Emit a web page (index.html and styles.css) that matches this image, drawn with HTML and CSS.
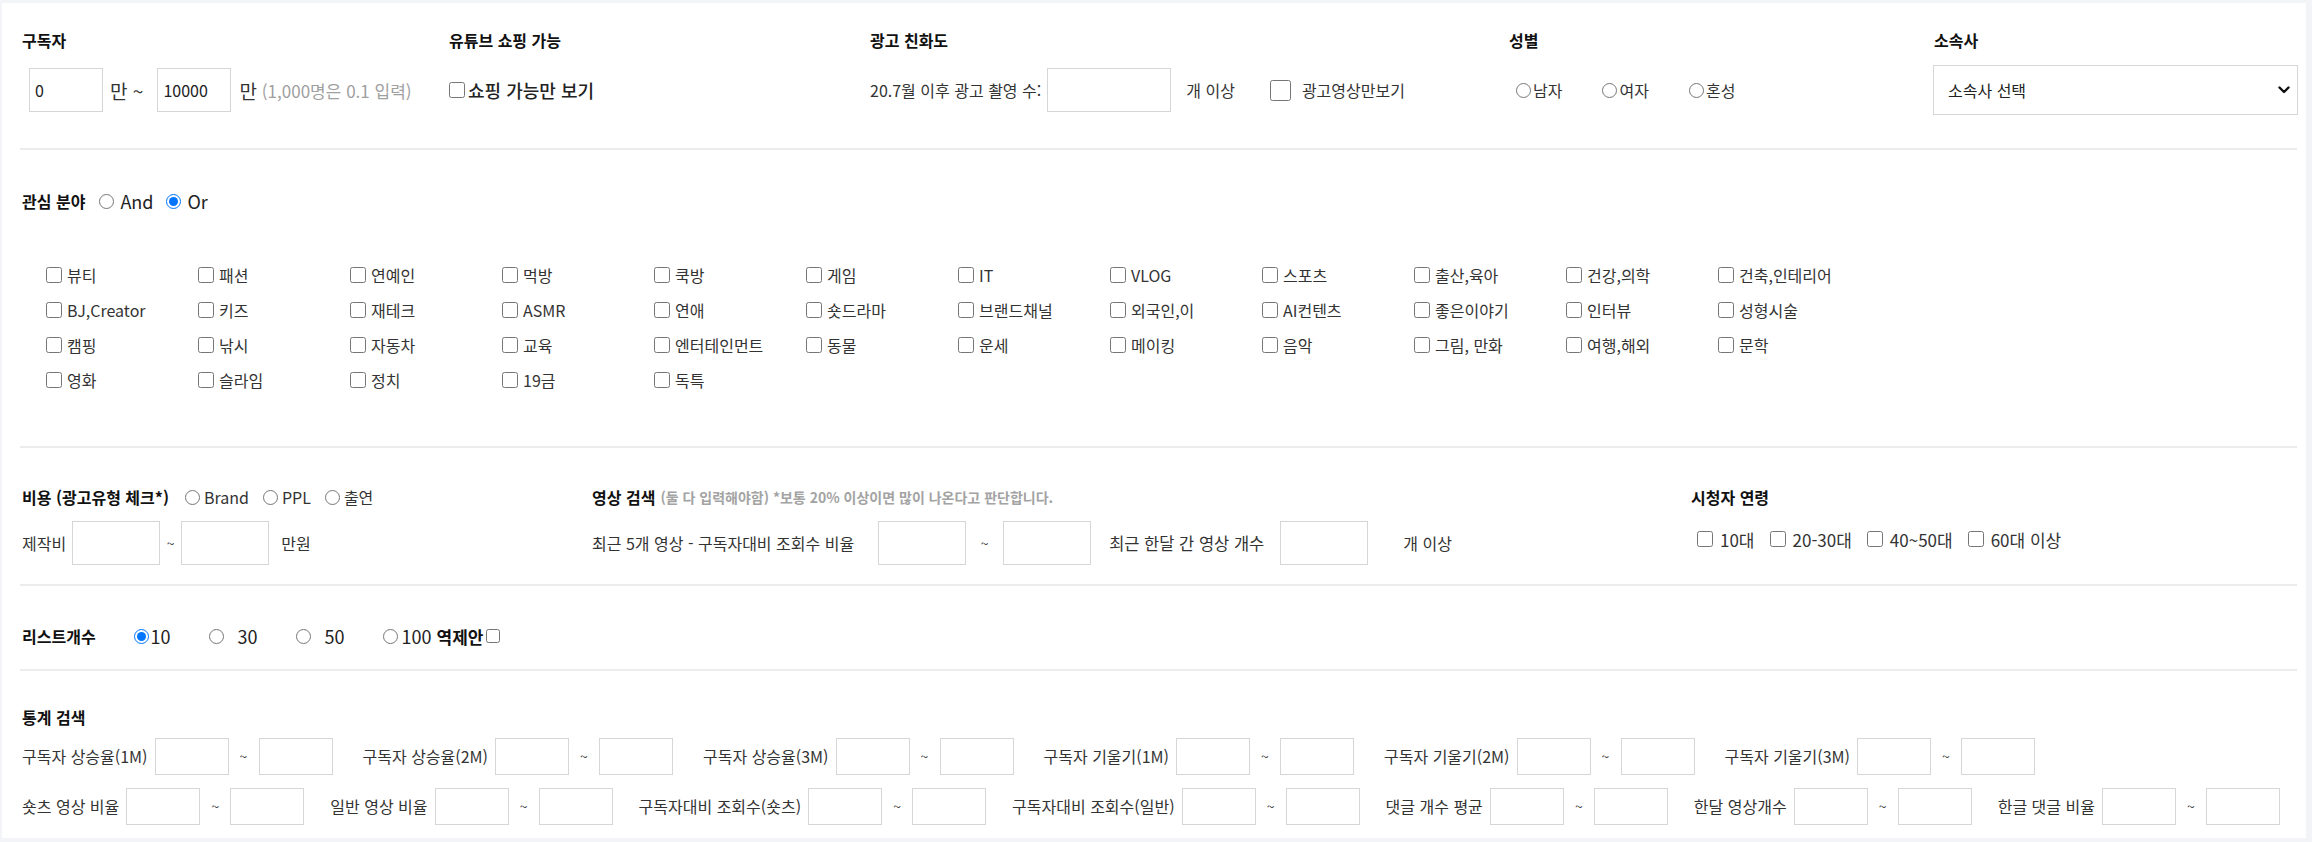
FILE: index.html
```html
<!DOCTYPE html>
<html lang="ko">
<head>
  <meta charset="UTF-8" />
  <title>채널 검색 필터</title>
  <link rel="stylesheet" href="styles.css">
</head>
<body>

<div class="panel">

  <div class="sec top">
    <div class="col c1">
      <div class="ttl">구독자</div>
      <div class="ctl">
        <input type="text" class="box sub-in first" value="0" />
        <span class="unit">만 ~</span>
        <input type="text" class="box sub-in" value="10000" />
        <span class="unit unit-end">만</span>
        <span class="hint">(1,000명은 0.1 입력)</span>
      </div>
    </div>
    <div class="col c2">
      <div class="ttl">유튜브 쇼핑 가능</div>
      <div class="ctl">
        <label class="shop"><input type="checkbox" />쇼핑 가능만 보기</label>
      </div>
    </div>
    <div class="col c3">
      <div class="ttl">광고 친화도</div>
      <div class="ctl">
        <span>20.7월 이후 광고 촬영 수:</span>
        <input type="text" class="box ad-in" />
        <span class="ad-unit">개 이상</span>
        <label class="ad-only"><input type="checkbox" />광고영상만보기</label>
      </div>
    </div>
    <div class="col c4">
      <div class="ttl">성별</div>
      <div class="ctl gender">
        <label><input type="radio" name="gender" />남자</label>
        <label><input type="radio" name="gender" />여자</label>
        <label><input type="radio" name="gender" />혼성</label>
      </div>
    </div>
    <div class="col c5">
      <div class="ttl">소속사</div>
      <div class="ctl">
        <div class="select-wrap">
          <select class="agency">
            <option>소속사 선택</option>
          </select>
          <svg class="chev" width="12" height="8" viewBox="0 0 12 8"><path d="M1.5 1.5 L6 6 L10.5 1.5" fill="none" stroke="#111" stroke-width="2.4" stroke-linecap="round" stroke-linejoin="round"/></svg>
        </div>
      </div>
    </div>
  </div>

  <hr class="line" />

  <div class="sec interest">
    <div class="ttl-row">
      <span class="ttl">관심 분야</span>
      <label class="op"><input type="radio" name="op" />And</label>
      <label class="op"><input type="radio" name="op" checked />Or</label>
    </div>
    <div class="cat-grid">
      <label class="chk"><input type="checkbox" />뷰티</label>
      <label class="chk"><input type="checkbox" />패션</label>
      <label class="chk"><input type="checkbox" />연예인</label>
      <label class="chk"><input type="checkbox" />먹방</label>
      <label class="chk"><input type="checkbox" />쿡방</label>
      <label class="chk"><input type="checkbox" />게임</label>
      <label class="chk"><input type="checkbox" />IT</label>
      <label class="chk"><input type="checkbox" />VLOG</label>
      <label class="chk"><input type="checkbox" />스포츠</label>
      <label class="chk"><input type="checkbox" />출산,육아</label>
      <label class="chk"><input type="checkbox" />건강,의학</label>
      <label class="chk"><input type="checkbox" />건축,인테리어</label>

      <label class="chk"><input type="checkbox" />BJ,Creator</label>
      <label class="chk"><input type="checkbox" />키즈</label>
      <label class="chk"><input type="checkbox" />재테크</label>
      <label class="chk"><input type="checkbox" />ASMR</label>
      <label class="chk"><input type="checkbox" />연애</label>
      <label class="chk"><input type="checkbox" />숏드라마</label>
      <label class="chk"><input type="checkbox" />브랜드채널</label>
      <label class="chk"><input type="checkbox" />외국인,이</label>
      <label class="chk"><input type="checkbox" />AI컨텐츠</label>
      <label class="chk"><input type="checkbox" />좋은이야기</label>
      <label class="chk"><input type="checkbox" />인터뷰</label>
      <label class="chk"><input type="checkbox" />성형시술</label>

      <label class="chk"><input type="checkbox" />캠핑</label>
      <label class="chk"><input type="checkbox" />낚시</label>
      <label class="chk"><input type="checkbox" />자동차</label>
      <label class="chk"><input type="checkbox" />교육</label>
      <label class="chk"><input type="checkbox" />엔터테인먼트</label>
      <label class="chk"><input type="checkbox" />동물</label>
      <label class="chk"><input type="checkbox" />운세</label>
      <label class="chk"><input type="checkbox" />메이킹</label>
      <label class="chk"><input type="checkbox" />음악</label>
      <label class="chk"><input type="checkbox" />그림, 만화</label>
      <label class="chk"><input type="checkbox" />여행,해외</label>
      <label class="chk"><input type="checkbox" />문학</label>

      <label class="chk"><input type="checkbox" />영화</label>
      <label class="chk"><input type="checkbox" />슬라임</label>
      <label class="chk"><input type="checkbox" />정치</label>
      <label class="chk"><input type="checkbox" />19금</label>
      <label class="chk"><input type="checkbox" />독특</label>
    </div>
  </div>

  <hr class="line" />

  <div class="sec cost">
    <div class="grp g1">
      <div class="ttl-row">
        <span class="ttl">비용 (광고유형 체크*)</span>
        <label class="ctype"><input type="radio" name="ctype" />Brand</label>
        <label class="ctype"><input type="radio" name="ctype" />PPL</label>
        <label class="ctype"><input type="radio" name="ctype" />출연</label>
      </div>
      <div class="row">
        <span>제작비</span>
        <input type="text" class="box mid-in cost-first" />
        <span class="tilde t-cost">~</span>
        <input type="text" class="box mid-in" />
        <span class="won">만원</span>
      </div>
    </div>
    <div class="grp g2">
      <div class="ttl-row">
        <span class="ttl">영상 검색</span>
        <span class="note">(둘 다 입력해야함) *보통 20% 이상이면 많이 나온다고 판단합니다.</span>
      </div>
      <div class="row">
        <span>최근 5개 영상 - 구독자대비 조회수 비율</span>
        <input type="text" class="box mid-in v-first" />
        <span class="tilde t-video">~</span>
        <input type="text" class="box mid-in" />
        <span class="v-label">최근 한달 간 영상 개수</span>
        <input type="text" class="box mid-in v-count" />
        <span class="v-unit">개 이상</span>
      </div>
    </div>
    <div class="grp g3">
      <div class="ttl-row">
        <span class="ttl">시청자 연령</span>
      </div>
      <div class="row ages">
        <label><input type="checkbox" />10대</label>
        <label><input type="checkbox" />20-30대</label>
        <label><input type="checkbox" />40~50대</label>
        <label><input type="checkbox" />60대 이상</label>
      </div>
    </div>
  </div>

  <hr class="line" />

  <div class="sec list">
    <span class="ttl">리스트개수</span>
    <label class="cnt"><input type="radio" name="cnt" checked />10</label>
    <label class="cnt sp"><input type="radio" name="cnt" />30</label>
    <label class="cnt sp"><input type="radio" name="cnt" />50</label>
    <label class="cnt last"><input type="radio" name="cnt" />100</label>
    <label class="offer">역제안<input type="checkbox" /></label>
  </div>

  <hr class="line" />

  <div class="sec stats">
    <div class="ttl">통계 검색</div>
    <div class="stat-row r1">
      <div class="stat"><span>구독자 상승율(1M)</span><input type="text" class="box sm-in" /><span class="tilde">~</span><input type="text" class="box sm-in" /></div>
      <div class="stat"><span>구독자 상승율(2M)</span><input type="text" class="box sm-in" /><span class="tilde">~</span><input type="text" class="box sm-in" /></div>
      <div class="stat"><span>구독자 상승율(3M)</span><input type="text" class="box sm-in" /><span class="tilde">~</span><input type="text" class="box sm-in" /></div>
      <div class="stat"><span>구독자 기울기(1M)</span><input type="text" class="box sm-in" /><span class="tilde">~</span><input type="text" class="box sm-in" /></div>
      <div class="stat"><span>구독자 기울기(2M)</span><input type="text" class="box sm-in" /><span class="tilde">~</span><input type="text" class="box sm-in" /></div>
      <div class="stat"><span>구독자 기울기(3M)</span><input type="text" class="box sm-in" /><span class="tilde">~</span><input type="text" class="box sm-in" /></div>
    </div>
    <div class="stat-row r2">
      <div class="stat"><span>숏츠 영상 비율</span><input type="text" class="box sm-in" /><span class="tilde">~</span><input type="text" class="box sm-in" /></div>
      <div class="stat"><span>일반 영상 비율</span><input type="text" class="box sm-in" /><span class="tilde">~</span><input type="text" class="box sm-in" /></div>
      <div class="stat"><span>구독자대비 조회수(숏츠)</span><input type="text" class="box sm-in" /><span class="tilde">~</span><input type="text" class="box sm-in" /></div>
      <div class="stat"><span>구독자대비 조회수(일반)</span><input type="text" class="box sm-in" /><span class="tilde">~</span><input type="text" class="box sm-in" /></div>
      <div class="stat"><span>댓글 개수 평균</span><input type="text" class="box sm-in" /><span class="tilde">~</span><input type="text" class="box sm-in" /></div>
      <div class="stat"><span>한달 영상개수</span><input type="text" class="box sm-in" /><span class="tilde">~</span><input type="text" class="box sm-in" /></div>
      <div class="stat"><span>한글 댓글 비율</span><input type="text" class="box sm-in" /><span class="tilde">~</span><input type="text" class="box sm-in" /></div>
    </div>
  </div>

</div>

</body>
</html>
```

FILE: styles.css
```css
* {
  box-sizing: border-box;
}

html, body {
  margin: 0;
}

body {
  font-family: "Noto Sans CJK KR", "Noto Sans", sans-serif;
  font-size: 16px;
  color: #333;
  background: #f3f4f7;
  padding: 3px 6px 4px 2px;
  width: 2312px;
  height: 842px;
  overflow: hidden;
}

.panel {
  background: #fff;
  height: 835px;
  padding: 0 9px 0 18px;
}

.line {
  margin: 0;
  border: none;
  height: 2px;
  background: #ececec;
}

.ttl {
  font-weight: 700;
  color: #111;
  line-height: 24px;
}

input[type="checkbox"],
input[type="radio"] {
  margin: 0;
  flex: none;
}

input[type="checkbox"] {
  width: 16px;
  height: 16px;
}

input[type="radio"] {
  width: 15px;
  height: 15px;
}

label {
  display: inline-flex;
  align-items: center;
}

.box {
  border: 1px solid #d6d6d6;
  border-radius: 0;
  background: #fff;
  font-family: inherit;
  font-size: 16px;
  color: #222;
  padding: 0 5px;
  outline: none;
  flex: none;
}

/* 상단 */
.top {
  display: flex;
  padding: 25px 0 33px;
}

.col {
  flex: none;
  padding-left: 2px;
}

.c1 { width: 427px; }
.c2 { width: 421px; }
.c3 { width: 639px; }
.c4 { width: 425px; }
.c5 { flex: 1; }

.ctl {
  display: flex;
  align-items: center;
  height: 50px;
  margin-top: 13px;
  white-space: nowrap;
}

.sub-in {
  width: 74px;
  height: 44px;
}

.sub-in.first {
  margin-left: 7px;
}

.unit {
  font-size: 19px;
  margin: 0 14px 0 7px;
}

.unit-end {
  margin: 0 5px 0 8px;
}

.hint {
  color: #a0a0a0;
  font-size: 17px;
}

.shop {
  font-size: 18px;
  font-weight: 500;
  color: #222;
  gap: 3px;
}

.ad-in {
  width: 124px;
  height: 44px;
  margin-left: 6px;
}

.ad-unit {
  margin-left: 15px;
}

.ad-only {
  margin-left: 35px;
  gap: 11px;
}

.ad-only input {
  width: 21px;
  height: 21px;
}

.gender {
  padding-left: 7px;
}

.gender label {
  gap: 2px;
  margin-right: 40px;
}

.select-wrap {
  position: relative;
  width: 365px;
  height: 50px;
  margin-left: -1px;
}

.agency {
  appearance: none;
  width: 100%;
  height: 100%;
  border: 1px solid #d6d6d6;
  border-radius: 0;
  background: #fff;
  font-family: inherit;
  font-size: 16px;
  color: #222;
  padding: 0 14px;
}

.chev {
  position: absolute;
  right: 8px;
  top: 21px;
  pointer-events: none;
}

/* 관심 분야 */
.interest {
  padding: 38px 0 49px;
}

.ttl-row {
  display: flex;
  align-items: center;
  height: 26px;
  padding-left: 2px;
  white-space: nowrap;
}

.op {
  font-size: 18px;
  gap: 6px;
  color: #222;
}

.op:first-of-type {
  margin-left: 14px;
}

.op + .op {
  margin-left: 13px;
}

.cat-grid {
  display: grid;
  grid-template-columns: repeat(12, 152px);
  grid-auto-rows: 35px;
  margin-top: 43px;
  padding-left: 26px;
}

.chk {
  gap: 5px;
  white-space: nowrap;
}

/* 비용 / 영상 / 연령 */
.cost {
  display: flex;
  padding: 37px 0 18px;
}

.cost .ttl-row {
  height: 24px;
}

.g1 { width: 570px; flex: none; }
.g2 { width: 1099px; flex: none; }
.g3 { flex: 1; }

.row {
  display: flex;
  align-items: center;
  height: 46px;
  margin-top: 11px;
  padding-left: 2px;
  white-space: nowrap;
}

.ctype {
  gap: 4px;
  margin-left: 14px;
}

.ctype:first-of-type {
  margin-left: 16px;
}

.mid-in {
  width: 88px;
  height: 44px;
}

.cost-first {
  margin-left: 6px;
}

.tilde {
  text-align: center;
  font-size: 14px;
  flex: none;
}

.t-cost {
  width: 21px;
}

.won {
  margin-left: 12px;
}

.note {
  margin-left: 5px;
  font-size: 14px;
  font-weight: 700;
  color: #a3a3a3;
}

.v-first {
  margin-left: 24px;
}

.t-video {
  width: 37px;
}

.v-label {
  margin-left: 18px;
  font-size: 16.5px;
}

.v-count {
  margin-left: 16px;
}

.v-unit {
  margin-left: 35px;
}

.ages {
  padding-left: 8px;
  height: 38px;
  margin-top: 11px;
}

.ages label {
  font-size: 17px;
  gap: 7px;
  margin-right: 15px;
}

/* 리스트개수 */
.list {
  display: flex;
  align-items: center;
  height: 83px;
  padding: 38px 0 21px 2px;
}

.cnt {
  font-size: 18px;
  color: #222;
  gap: 2px;
  margin-left: 38px;
}

.cnt.sp {
  gap: 14px;
}

.cnt.last {
  gap: 4px;
}

.offer {
  font-size: 17px;
  font-weight: 700;
  color: #111;
  margin-left: 5px;
  gap: 3px;
}

.offer input {
  width: 14px;
  height: 14px;
}

/* 통계 검색 */
.stats {
  padding: 34px 0 0 2px;
}

.stat-row {
  display: flex;
  align-items: center;
  height: 38px;
  margin-top: 8px;
  white-space: nowrap;
}

.stat-row + .stat-row {
  margin-top: 12px;
}

.stat {
  display: flex;
  align-items: center;
}

.r1 .stat {
  margin-right: 30px;
}

.r2 .stat {
  margin-right: 26px;
}

.stat span:first-child {
  margin-right: 7px;
}

.sm-in {
  width: 74px;
  height: 37px;
}

.stat .tilde {
  width: 30px;
}
```
